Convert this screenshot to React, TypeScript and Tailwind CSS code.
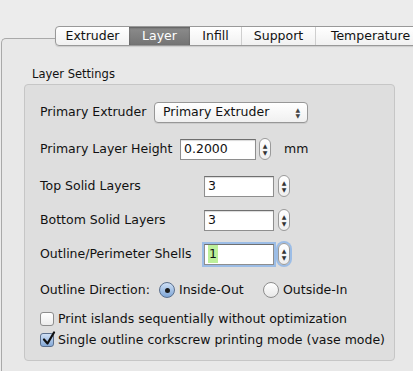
import { ReactNode } from "react"

function Stepper() {
    return (
        <div className="flex flex-col items-center justify-center w-[12px] h-[22px] rounded-[6px] border border-[#9a9a9a] bg-gradient-to-b from-white to-[#eeeeee]">
            <span className="text-[6px] leading-[7px] text-[#333]">▲</span>
            <span className="text-[6px] leading-[7px] text-[#333]">▼</span>
        </div>
    )
}

function Field({ value, width, focused }: { value: ReactNode; width: string; focused?: boolean }) {
    return (
        <div className={`flex items-center h-[21px] ${width} bg-white border border-[#8e8e8e] border-t-[#6f6f6f] pl-[3px] ${focused ? "shadow-[0_0_0_2px_#9cbde6]" : "shadow-[inset_0_1px_1px_rgba(0,0,0,0.15)]"}`}>
            {value}
        </div>
    )
}

function Radio({ checked }: { checked?: boolean }) {
    return (
        <div className={`flex items-center justify-center w-[16px] h-[16px] rounded-full border ${checked ? "border-[#5a6f8d] bg-gradient-to-b from-[#cfe0f5] to-[#7fa6d6]" : "border-[#8d8d8d] bg-gradient-to-b from-white to-[#e8e8e8]"}`}>
            {checked && <div className="w-[5px] h-[5px] rounded-full bg-[#1a1a1a]" />}
        </div>
    )
}

function Checkbox({ checked }: { checked?: boolean }) {
    return (
        <div className={`relative w-[14px] h-[14px] rounded-[3px] border ${checked ? "border-[#5a6f8d] bg-gradient-to-b from-[#cfe0f5] to-[#86aad8]" : "border-[#8d8d8d] bg-gradient-to-b from-white to-[#ececec]"}`}>
            {checked && (
                <svg viewBox="0 0 14 14" className="absolute left-[1px] -top-[3px] w-[14px] h-[15px]">
                    <path d="M2 8 L5.5 12 L12 1" fill="none" stroke="#111" strokeWidth="2.2" strokeLinecap="round" strokeLinejoin="round" />
                </svg>
            )}
        </div>
    )
}

function App() {
    const tabs = [
        { name: "Extruder", w: "w-[73px]" },
        { name: "Layer", w: "w-[61px]" },
        { name: "Infill", w: "w-[51px]" },
        { name: "Support", w: "w-[74px]" },
        { name: "Temperature", w: "w-[110px]" },
    ]

    return (
        <div className="w-[413px] h-[371px] overflow-hidden bg-[#ececec] text-[12.5px] text-[#111] font-['DejaVu_Sans',sans-serif]">
            <div className="pt-[26px]">
                <div className="relative z-10 flex ml-[55px] -mb-[8px] h-[20px] w-[500px]">
                    <div className="flex h-[20px] rounded-l-[4px] border border-[#999] bg-gradient-to-b from-white to-[#f1f1f1] overflow-hidden shadow-[0_1px_1px_rgba(0,0,0,0.12)]">
                        {tabs.map((t, i) => {
                            const sel = t.name === "Layer"
                            return (
                                <div
                                    key={t.name}
                                    className={`flex items-center justify-center h-full ${t.w} ${sel ? "bg-gradient-to-b from-[#8c8c8c] to-[#747474] text-white shadow-[inset_0_1px_2px_rgba(0,0,0,0.35)]" : ""} ${i > 0 && !sel && tabs[i - 1].name !== "Layer" ? "border-l border-[#cfcfcf]" : ""}`}
                                >
                                    {t.name}
                                </div>
                            )
                        })}
                    </div>
                </div>
                <div className="ml-[1px] h-[340px] rounded-tl-[5px] border-t border-l border-[#a9a9a9] bg-[#e8e8e8]">
                    <div className="pl-[30px] pt-[29px] text-[11.5px] leading-[13px]">Layer Settings</div>
                    <div className="ml-[22px] mt-[3px] w-[371px] h-[277px] rounded-[4px] border border-[#c6c6c6] bg-[#dedede] pl-[15px] pt-[17px]">
                        <div className="flex items-center h-[21px]">
                            <span className="w-[114px]">Primary Extruder</span>
                            <div className="flex items-center justify-between w-[154px] h-[21px] rounded-[4px] border border-[#979797] bg-gradient-to-b from-white to-[#f0f0f0] pl-[8px] pr-[7px] shadow-[0_1px_0_rgba(0,0,0,0.08)]">
                                <span>Primary Extruder</span>
                                <span className="flex flex-col text-[6px] leading-[6px] text-[#444]">
                                    <span>▲</span>
                                    <span>▼</span>
                                </span>
                            </div>
                        </div>
                        <div className="flex items-center h-[22px] mt-[15px]">
                            <span className="w-[140px]">Primary Layer Height</span>
                            <Field value="0.2000" width="w-[76px]" />
                            <div className="ml-[3px]"><Stepper /></div>
                            <span className="ml-[13px]">mm</span>
                        </div>
                        <div className="flex items-center h-[22px] mt-[15px]">
                            <span className="w-[164px]">Top Solid Layers</span>
                            <Field value="3" width="w-[70px]" />
                            <div className="ml-[4px]"><Stepper /></div>
                        </div>
                        <div className="flex items-center h-[22px] mt-[12px]">
                            <span className="w-[164px]">Bottom Solid Layers</span>
                            <Field value="3" width="w-[70px]" />
                            <div className="ml-[4px]"><Stepper /></div>
                        </div>
                        <div className="flex items-center h-[22px] mt-[12px]">
                            <span className="w-[164px]">Outline/Perimeter Shells</span>
                            <Field value={<span className="bg-[#bdf09a] px-[1px]">1</span>} width="w-[70px]" focused />
                            <div className="ml-[4px] rounded-[6px] shadow-[0_0_0_2px_#9cbde6]"><Stepper /></div>
                        </div>
                        <div className="flex items-center h-[20px] mt-[15px]">
                            <span className="w-[119px]">Outline Direction:</span>
                            <Radio checked />
                            <span className="ml-[4px] w-[84px]">Inside-Out</span>
                            <Radio />
                            <span className="ml-[4px]">Outside-In</span>
                        </div>
                        <div className="flex items-center h-[16px] mt-[11px]">
                            <Checkbox />
                            <span className="ml-[4px]">Print islands sequentially without optimization</span>
                        </div>
                        <div className="flex items-center h-[16px] mt-[5px]">
                            <Checkbox checked />
                            <span className="ml-[4px]">Single outline corkscrew printing mode (vase mode)</span>
                        </div>
                    </div>
                </div>
            </div>
        </div>
    )
}

export default App
